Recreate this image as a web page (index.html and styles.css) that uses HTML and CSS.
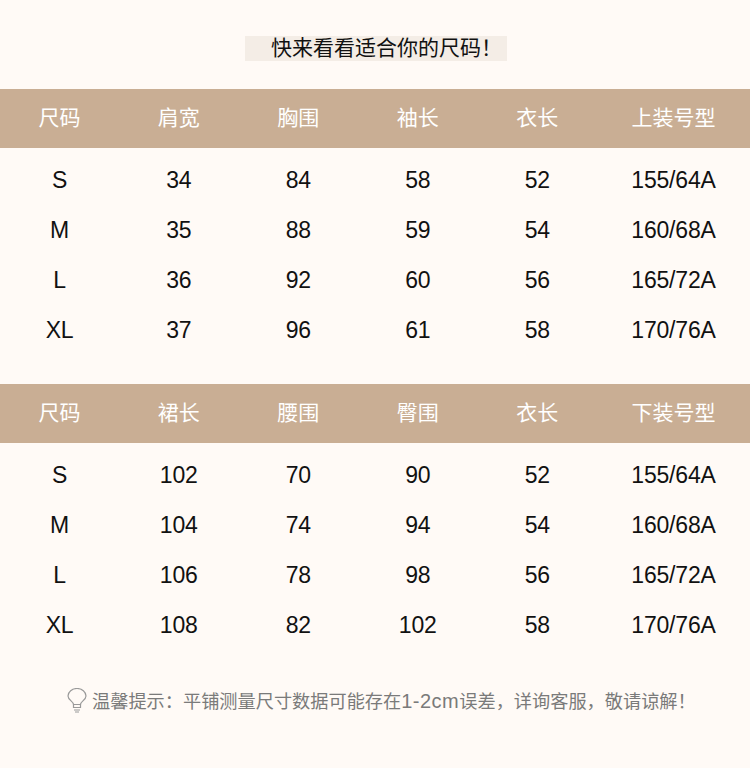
FILE: index.html
```html
<!DOCTYPE html>
<html lang="zh">
<head>
<meta charset="utf-8">
<title>尺码表</title>
<link rel="stylesheet" href="styles.css">
</head>
<body>
<main class="page">
  <header class="title-wrap"><h1 class="title">快来看看适合你的尺码！</h1></header>
  <section class="size-table">
    <div class="row head"><span>尺码</span><span>肩宽</span><span>胸围</span><span>袖长</span><span>衣长</span><span>上装号型</span></div>
    <div class="rows">
      <div class="row"><span>S</span><span>34</span><span>84</span><span>58</span><span>52</span><span>155/64A</span></div>
      <div class="row"><span>M</span><span>35</span><span>88</span><span>59</span><span>54</span><span>160/68A</span></div>
      <div class="row"><span>L</span><span>36</span><span>92</span><span>60</span><span>56</span><span>165/72A</span></div>
      <div class="row"><span>XL</span><span>37</span><span>96</span><span>61</span><span>58</span><span>170/76A</span></div>
    </div>
  </section>
  <section class="size-table second">
    <div class="row head"><span>尺码</span><span>裙长</span><span>腰围</span><span>臀围</span><span>衣长</span><span>下装号型</span></div>
    <div class="rows">
      <div class="row"><span>S</span><span>102</span><span>70</span><span>90</span><span>52</span><span>155/64A</span></div>
      <div class="row"><span>M</span><span>104</span><span>74</span><span>94</span><span>54</span><span>160/68A</span></div>
      <div class="row"><span>L</span><span>106</span><span>78</span><span>98</span><span>56</span><span>165/72A</span></div>
      <div class="row"><span>XL</span><span>108</span><span>82</span><span>102</span><span>58</span><span>170/76A</span></div>
    </div>
  </section>
  <footer class="tip">
    <svg class="bulb" width="20" height="25" viewBox="0 0 20 25" fill="none" stroke="#9a9a9a" stroke-width="1.2"><path d="M6.500 16.500c0-3-5.500-4.500-5.500-8.500a9 7.500 0 0 1 18 0c0 4-5.500 5.500-5.500 8.500z"/><path d="M6.500 16.500v3h7v-3M7 22h6M8 24h4"/></svg>
    <span>温馨提示：平铺测量尺寸数据可能存在<span class="num">1-2cm</span>误差，详询客服，敬请谅解！</span>
  </footer>
</main>
</body>
</html>
```
FILE: styles.css
```css
html, body { margin: 0; padding: 0; }
body { background: #fffaf6; font-family: "Liberation Sans", "Noto Sans CJK SC", sans-serif; color: #111; }
.page { width: 750px; height: 768px; overflow: hidden; display: flex; flex-direction: column; }
.title-wrap { display: flex; padding: 36px 0 0 245px; }
.title { margin: 0; box-sizing: border-box; width: 262px; height: 25px; padding-left: 26px; background: #f4ede6; font-weight: 400; font-size: 21px; line-height: 23px; color: #111; }
.size-table { margin-top: 28px; }
.size-table.second { margin-top: 29px; }
.row { display: grid; grid-template-columns: 119px 119.500px 119.500px 119.500px 119.500px 1fr; height: 50px; align-items: center; justify-items: center; font-size: 23px; letter-spacing: -0.200px; }
.row.head { box-sizing: border-box; height: 59px; padding-bottom: 5px; background: #c9ae94; color: #fff; font-size: 21px; letter-spacing: 0; }
.rows { padding-top: 7px; }
.tip { display: flex; align-items: center; margin-top: 37px; padding-left: 67px; gap: 5px; font-size: 18.200px; color: #7a7a7a; }
.num { font-size: 20px; letter-spacing: 0.500px; }
```
